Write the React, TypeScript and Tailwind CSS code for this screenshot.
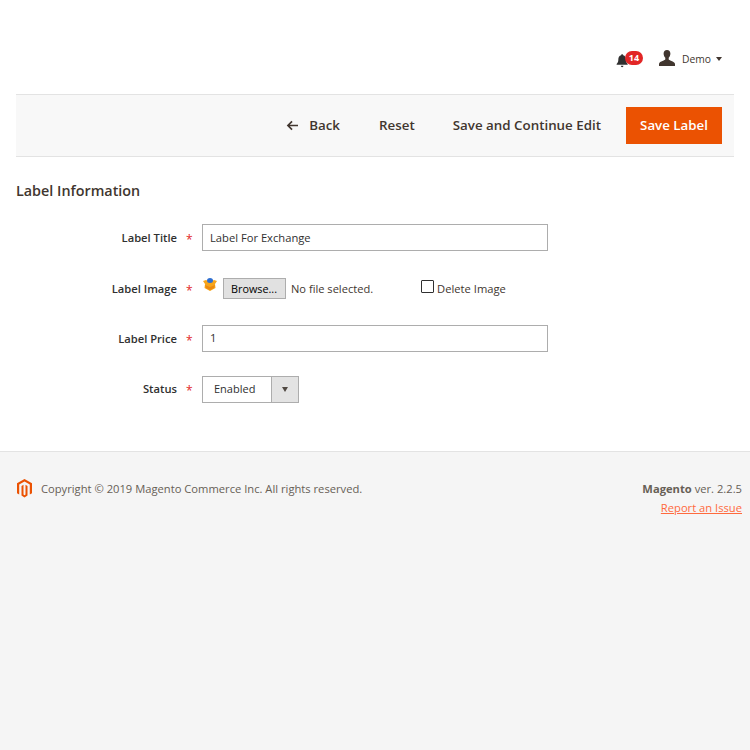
import React from 'react';

const font = { fontFamily: '"Open Sans", sans-serif' };

const FormLabel = ({ children, nudge = true }: { children: React.ReactNode; nudge?: boolean }) => (
  <div className={`w-[192px] shrink-0 flex justify-end items-center text-[11.2px] font-semibold text-[#303030] ${nudge ? 'pt-[1px]' : ''}`}>
    <span>{children}</span>
    <span className="ml-[9px] w-[6px] h-[8px] text-[#e22626] text-[12px] leading-[12px] font-normal">*</span>
  </div>
);

export default function App() {
  return (
    <div style={font} className="min-h-[750px] flex flex-col bg-white text-[#303030]">
      {/* Header */}
      <div className="h-[94px] flex items-start justify-end pt-[49px] pr-[28px]">
        <div className="relative w-[16px] h-[20px] mr-[27px] mt-[1px]">
          <svg viewBox="0 0 16 20" className="absolute left-0 top-[3px] w-[14px] h-[17px]" fill="#303030">
            <path d="M7 1.5c.7 0 1.2.5 1.2 1.1 2.300.6 3.300 2.500 3.300 4.900 0 2.500.5 3.700 2 5.300v1H.5v-1c1.500-1.600 2-2.800 2-5.300 0-2.400 1-4.300 3.300-4.900C5.800 2 6.300 1.500 7 1.500zM5.500 15h3c0 1-.6 1.700-1.500 1.700S5.500 16 5.500 15z" />
          </svg>
          <span className="absolute left-[9px] top-[1px] h-[14px] min-w-[18px] px-[3px] rounded-full bg-[#e22626] text-white text-[9px] font-bold leading-[14px] text-center">14</span>
        </div>
        <svg viewBox="0 0 16 16" className="w-[16px] h-[16px] mr-[7px] mt-[1px]" fill="#41362f">
          <path d="M8 0c2.200 0 3.400 1.500 3.400 3.600 0 1.700-.8 3.400-1.700 4.200v1.400c0 .6 1.200 1 2.800 1.700 1.500.7 3.500 1.300 3.500 3v2.100H0V14c0-1.700 2-2.300 3.500-3 1.600-.7 2.800-1.100 2.800-1.700V7.800C5.400 7 4.600 5.300 4.600 3.600 4.600 1.500 5.800 0 8 0z" />
        </svg>
        <span className="w-[28px] text-[10.300px] leading-[20px] text-[#41362f]">Demo</span>
        <span className="ml-[6px] mt-[8px] w-0 h-0 border-x-[3px] border-x-transparent border-t-[4px] border-t-[#41362f]" />
      </div>

      {/* Action bar */}
      <div className="mx-[16px] h-[63px] bg-[#f8f8f8] border-y border-[#e3e3e3] flex items-center justify-end pr-[12px] text-[13.350px] font-semibold text-[#41362f]">
        <svg viewBox="0 0 14 12" className="w-[13px] h-[11px] mr-[10px]" fill="none" stroke="#41362f" strokeWidth="1.800">
          <path d="M13 6H2M6.500 1.500 2 6l4.500 4.500" />
        </svg>
        <span className="mr-[39px]">Back</span>
        <span className="mr-[38px]">Reset</span>
        <span className="mr-[25px]">Save and Continue Edit</span>
        <button className="w-[96px] h-[37px] bg-[#eb5202] text-white text-[13.3px] font-semibold">Save Label</button>
      </div>

      {/* Form */}
      <div className="pt-[24px] h-[294px]">
        <h2 className="pl-[16px] text-[14.350px] leading-[20px] font-semibold text-[#41362f] mb-[23px]">Label Information</h2>

        <div className="flex flex-col">
          <div className="flex h-[27px] items-center">
            <FormLabel>Label Title</FormLabel>
            <div className="ml-[10px] w-[346px] h-[27px] border border-[#adadad] px-[7px] text-[11.2px] leading-[25px]">Label For Exchange</div>
          </div>

          <div className="flex h-[27px] items-center mt-[24px]">
            <FormLabel>Label Image</FormLabel>
            <svg viewBox="0 0 16 16" className="ml-[10px] -mt-[8px] w-[16px] h-[16px]">
              <path d="M1 4l3-1 4 2 4-2 3 1-2 3 .5 4L8 14l-5.500-3L3 7z" fill="#f7a51b" />
              <path d="M3 8l5 2 5-2-1 3-4 2-4-2z" fill="#ee8a10" />
              <ellipse cx="8" cy="3.500" rx="3" ry="2.500" fill="#2f6fd0" />
            </svg>
            <button className="ml-[5px] w-[63px] h-[21px] pt-[1px] pr-[1px] bg-[#e1e1e1] border border-[#adadad] text-[10.800px] text-black">Browse...</button>
            <span className="ml-[5px] mt-[1px] text-[11.100px] text-[#41362f]">No file selected.</span>
            <span className="ml-[48px] w-[13px] h-[13px] -mt-[4px] border border-[#303030] rounded-[1px] bg-white" />
            <span className="ml-[3px] mt-[1px] text-[11.200px] text-[#41362f]">Delete Image</span>
          </div>

          <div className="flex h-[27px] items-center mt-[23px]">
            <FormLabel>Label Price</FormLabel>
            <div className="ml-[10px] w-[346px] h-[27px] border border-[#adadad] px-[7px] text-[11.2px] leading-[24px]">1</div>
          </div>

          <div className="flex h-[27px] items-center mt-[24px]">
            <FormLabel nudge={false}>Status</FormLabel>
            <div className="ml-[10px] w-[97px] h-[27px] border border-[#adadad] flex text-[11px]">
              <span className="w-[69px] pl-[11px] leading-[24px] border-r border-[#adadad]">Enabled</span>
              <span className="flex-1 bg-[#e3e3e3] flex items-center justify-center">
                <span className="w-0 h-0 border-x-[3.500px] border-x-transparent border-t-[5px] border-t-[#514943]" />
              </span>
            </div>
          </div>
        </div>
      </div>

      {/* Footer */}
      <div className="flex-1 bg-[#f5f5f5] border-t border-[#e3e3e3] pl-[16px] pr-[8px] pt-[27px] flex justify-between items-start text-[11.2px] text-[#676056]">
        <div className="flex items-center">
          <svg viewBox="0 0 16 19" className="w-[17px] h-[19px] mr-[8px]" fill="#eb5202">
            <path d="M8 0 .5 4.300v9.900l2.200 1.300V5.600L8 2.500l5.300 3.100v9.900l2.200-1.300V4.300z" />
            <path d="M7 5.800 5 7v9.600L8 18.500l3-1.900V7L9 5.800v9.800l-1 .6-1-.6z" />
          </svg>
          <span className="leading-[19px]">Copyright © 2019 Magento Commerce Inc. All rights reserved.</span>
        </div>
        <div className="text-right leading-[19px]">
          <div><span className="font-bold">Magento</span> ver. 2.2.5</div>
          <a className="text-[#ff6a3d] underline">Report an Issue</a>
        </div>
      </div>
    </div>
  );
}
